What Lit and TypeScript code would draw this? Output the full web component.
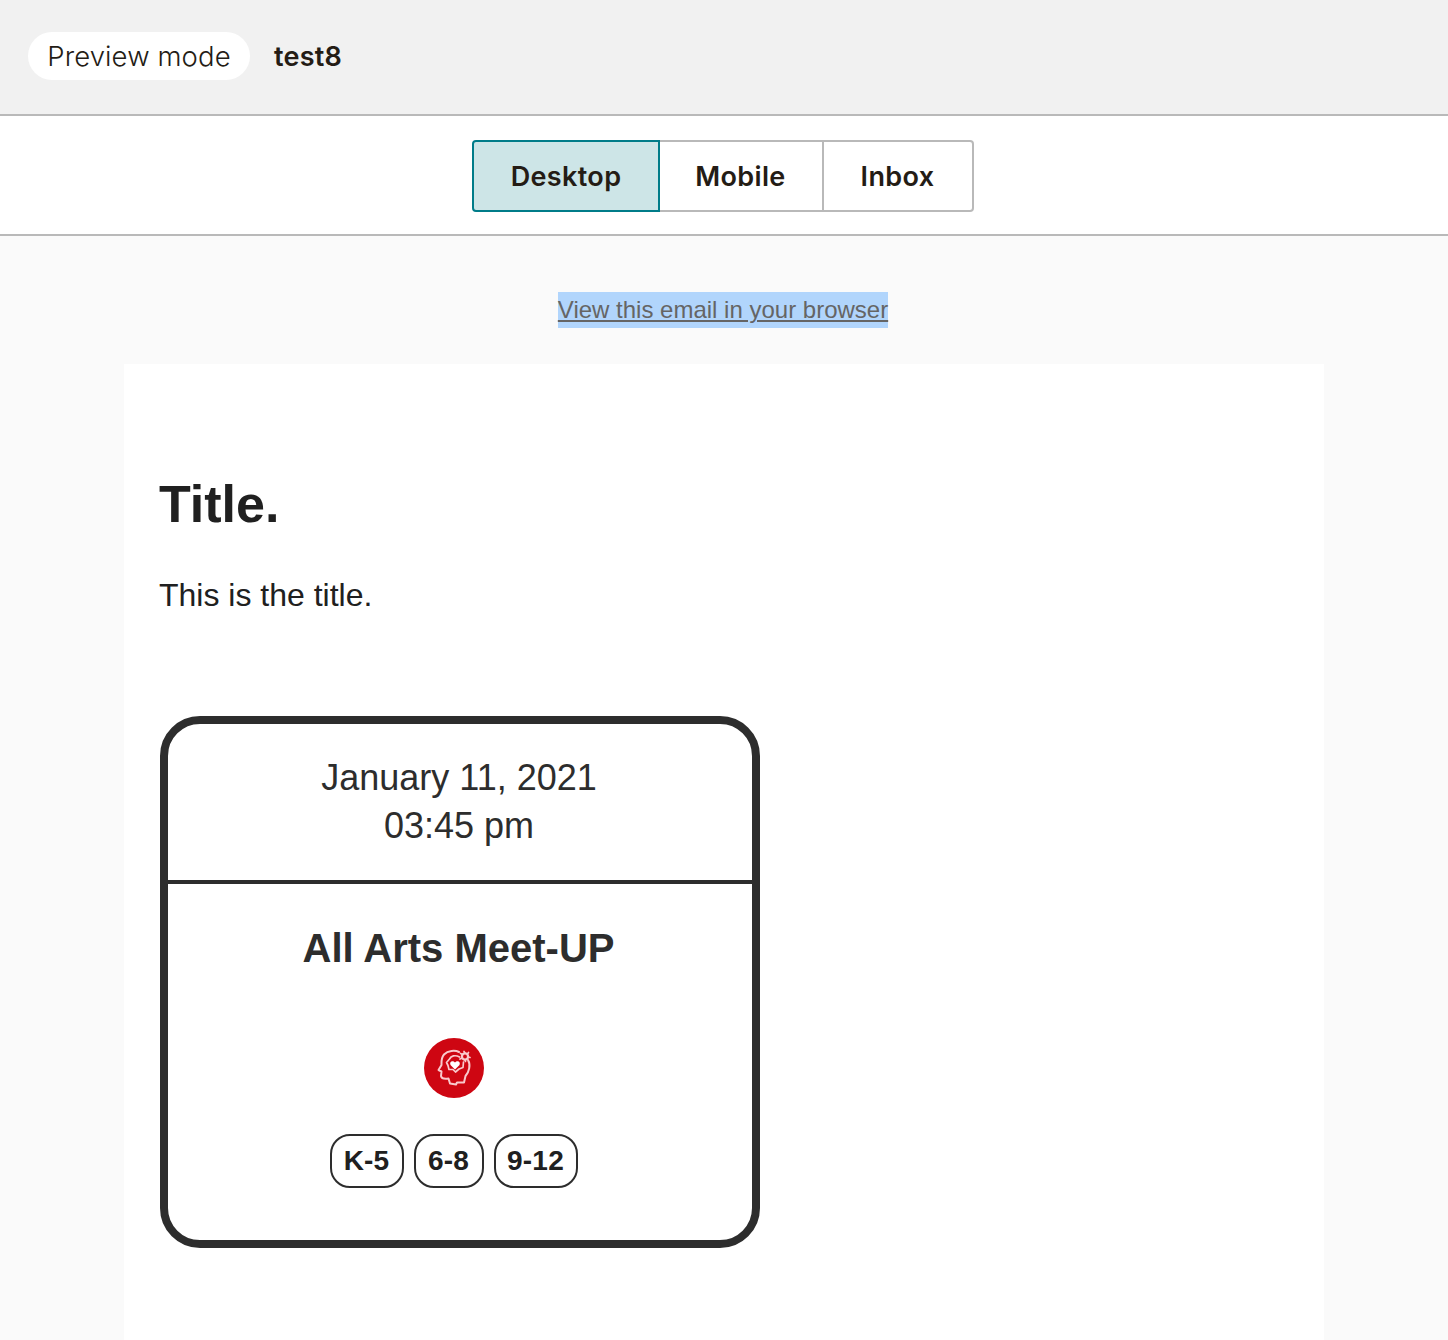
import { LitElement, html, css } from "lit";
import { customElement, property, state } from "lit/decorators.js";
import { classMap } from "lit/directives/class-map.js";

@customElement("event-card")
class EventCard extends LitElement {
  @property() date = "";
  @property() time = "";
  @property() name = "";
  @property({ attribute: false }) grades: string[] = [];

  static styles = css`
    :host {
      display: flex;
      flex-direction: column;
      box-sizing: border-box;
      width: 600px;
      height: 532px;
      border: 8px solid #2d2d2d;
      border-radius: 40px;
      color: #2d2d2d;
      font-family: "Liberation Sans", Arial, sans-serif;
      text-align: center;
    }
    .when {
      box-sizing: border-box;
      height: 160px;
      padding: 30px 2px 0 0;
      border-bottom: 4px solid #2d2d2d;
      font-size: 36px;
      line-height: 48px;
    }
    .name {
      margin: 34px 3px 0 0;
      font-size: 40px;
      line-height: 60px;
      font-weight: 700;
    }
    .icon {
      display: block;
      width: 60px;
      height: 60px;
      margin: 60px 0 0 256px;
    }
    .grades {
      display: flex;
      justify-content: center;
      gap: 10px;
      margin: 36px 12px 0 0;
    }
    .grade {
      display: flex;
      justify-content: center;
      box-sizing: border-box;
      width: 74px;
      height: 54px;
      padding-right: 1px;
      border: 2px solid #2d2d2d;
      border-radius: 20px;
      color: #202020;
      font-size: 28px;
      line-height: 49px;
      font-weight: 700;
      letter-spacing: 0.2px;
      white-space: nowrap;
    }
    .grade:nth-child(2) {
      width: 70px;
    }
    .grade:nth-child(3) {
      width: 84px;
    }
  `;

  render() {
    return html`
      <div class="when">${this.date}<br />${this.time}</div>
      <div class="name">${this.name}</div>
      <svg class="icon" viewBox="0 0 60 60" fill="none">
        <circle cx="30" cy="30" r="30" fill="#ce0612" />
        <g stroke="#f9c9cc" stroke-linecap="round" stroke-linejoin="round">
          <path
            stroke-width="2"
            d="M35 14C31 12 24 12.500 20 16.500C17 20 17.500 24 17.500 27L14.500 32L17.500 33.500L17 38C17.500 41 21 41 24.500 40.500L26 45.500L32 46.500L33 44.500L40 44.500L41.500 38C45 34 47 27 44 22"
          />
          <path
            stroke-width="1.700"
            d="M35.500 19C31 16.500 27 18 25.500 21L22.500 24.500L24 27.500L25 31.500L29 31.500L31.500 34L35 31L39 29.500L39.500 24"
          />
          <circle cx="41" cy="18.500" r="3.100" stroke-width="2.300" />
          <path stroke-width="1.700" d="M36.500 15.500L38.500 16.500M40 13.500L41 15M44.500 14.500L43.500 16M46 19.500L44 19M41.500 23.500L41 22M36 21L38 20" />
        </g>
        <path d="M31 31.500L26.500 27C25 23 29 22 31 24.500C33 22 37 23 35.500 27Z" fill="#fff" />
      </svg>
      <div class="grades">
        ${this.grades.map((g) => html`<span class="grade">${g}</span>`)}
      </div>
    `;
  }
}

@customElement("app-root")
class AppRoot extends LitElement {
  @state() private active = "Desktop";

  static styles = css`
    :host {
      display: flex;
      flex-direction: column;
      height: 1340px;
      overflow: hidden;
      background: #fafafa;
      font-family: "Liberation Sans", Arial, sans-serif;
    }
    .header {
      display: flex;
      align-items: flex-start;
      box-sizing: border-box;
      height: 116px;
      padding: 32px 28px 0;
      gap: 24px;
      border-bottom: 2px solid #b9b9b9;
      background: #f1f1f1;
      color: #241c15;
      font-family: Inter, sans-serif;
      font-size: 28px;
      line-height: 48px;
    }
    .mode {
      box-sizing: border-box;
      width: 222px;
      height: 48px;
      border-radius: 24px;
      background: #fff;
      text-align: center;
      font-size: 27.5px;
      font-weight: 350;
      letter-spacing: 0.1px;
      white-space: nowrap;
    }
    .campaign {
      font-size: 27px;
      font-weight: 600;
      line-height: 50px;
      letter-spacing: 0.2px;
    }
    .toolbar {
      display: flex;
      justify-content: center;
      box-sizing: border-box;
      height: 120px;
      padding: 24px 2px 0 0;
      border-bottom: 2px solid #b9b9b9;
      background: #fff;
    }
    .tab {
      box-sizing: border-box;
      height: 72px;
      margin: 0;
      padding: 1px 0 0;
      border: 2px solid #b9b9b9;
      border-left-width: 0;
      background: #fff;
      color: #241c15;
      font-family: Inter, sans-serif;
      font-size: 27px;
      font-weight: 600;
      line-height: 67px;
      letter-spacing: 0.35px;
    }
    .desktop {
      width: 188px;
      border-left-width: 2px;
      border-radius: 4px 0 0 4px;
    }
    .mobile {
      width: 164px;
      padding-right: 1px;
    }
    .inbox {
      width: 150px;
      padding-right: 1px;
      border-radius: 0 4px 4px 0;
    }
    .active {
      border-color: #007c89;
      background: #cde5e7;
    }
    .preheader {
      display: flex;
      justify-content: center;
      box-sizing: border-box;
      height: 128px;
      padding: 56px 2px 0 0;
    }
    .view {
      height: 36px;
      background: #b1d5fc;
      color: #656565;
      font-size: 24px;
      line-height: 36px;
      text-decoration: underline;
      text-decoration-thickness: 2px;
      text-underline-offset: 2px;
    }
    .email {
      flex: 1;
      box-sizing: border-box;
      width: 1200px;
      margin-left: 124px;
      padding: 108px 36px 0;
      background: #fff;
      color: #202020;
    }
    .title {
      margin: 0 0 0 -1px;
      font-size: 52px;
      line-height: 64px;
      font-weight: 700;
    }
    .text {
      margin: 35px 0 97px -1px;
      font-size: 32px;
      line-height: 48px;
    }
  `;

  render() {
    return html`
      <header class="header">
        <span class="mode">Preview mode</span>
        <span class="campaign">test8</span>
      </header>
      <nav class="toolbar">
        ${["Desktop", "Mobile", "Inbox"].map(
          (t) => html`<button
            class=${classMap({ tab: true, [t.toLowerCase()]: true, active: t === this.active })}
            aria-pressed=${t === this.active}
            @click=${() => (this.active = t)}
          >${t}</button>`
        )}
      </nav>
      <div class="preheader"><a class="view">View this email in your browser</a></div>
      <main class="email">
        <h1 class="title">Title.</h1>
        <p class="text">This is the title.</p>
        <event-card
          date="January 11, 2021"
          time="03:45 pm"
          name="All Arts Meet-UP"
          .grades=${["K-5", "6-8", "9-12"]}
        ></event-card>
      </main>
    `;
  }
}
